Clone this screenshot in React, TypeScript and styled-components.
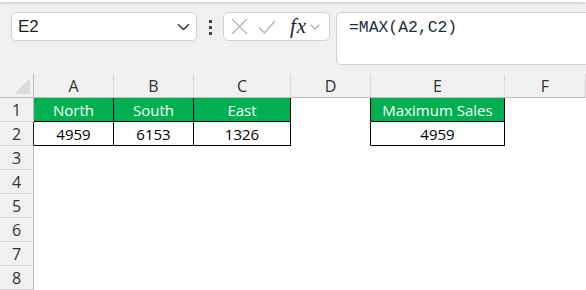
import React from 'react';
import styled, { createGlobalStyle } from 'styled-components';

const GlobalStyle = createGlobalStyle`
  html, body { margin: 0; padding: 0; }
  body { background: #f0f0f0; font-family: "Open Sans", "Liberation Sans", sans-serif; }
  * { box-sizing: border-box; }
`

const Page = styled.div`
  width: 586px;
  height: 290px;
  overflow: hidden;
  background: #f0f0f0;
  display: flex;
  flex-direction: column;
`

const TopEdge = styled.div`
  height: 2px;
  background: #fff;
  box-shadow: 0 1px 3px rgba(0, 0, 0, 0.18);
`

const Toolbar = styled.div`
  display: flex;
  align-items: flex-start;
  margin-top: 10px;
  padding-left: 11px;
`

const Box = styled.div`
  height: 29px;
  background: #fff;
  border: 1px solid #d1d1d1;
  border-radius: 5px;
  display: flex;
  align-items: center;
`

const NameBox = styled(Box)`
  width: 186px;
  padding: 0 6px 0 6px;
  justify-content: space-between;
  font-family: "Liberation Sans", Arial, sans-serif;
  font-size: 17px;
  color: #1f1f1f;
`

const Dots = styled.div`
  width: 26px;
  height: 29px;
  display: flex;
  flex-direction: column;
  align-items: center;
  justify-content: center;
  gap: 3px;
  padding-top: 1px;
  span {
    width: 3px;
    height: 3px;
    background: #444;
  }
`

const FxBox = styled(Box)`
  width: 107px;
  padding: 0 4px 0 7px;
  gap: 10px;
`

const FxText = styled.span`
  font-family: "Liberation Serif", "Times New Roman", serif;
  font-style: italic;
  font-size: 21px;
  color: #222;
  margin-left: 4px;
  margin-right: -7px;
  letter-spacing: 1px;
`

const FormulaBar = styled.div`
  flex: 1;
  margin-left: 6px;
  margin-right: -12px;
  height: 53px;
  background: #fff;
  border: 1px solid #d1d1d1;
  border-radius: 5px;
  padding: 5px 12px;
  font-family: "Liberation Mono", "DejaVu Sans Mono", monospace;
  font-size: 16.4px;
  color: #1b2a3a;
  line-height: 20px;
`

const Grid = styled.div`
  margin-top: 9px;
  display: grid;
  grid-template-columns: 34px 80px 80px 97px 80px 134px 81px 1fr;
  grid-auto-rows: 24px;
  font-size: 16px;
`

const Corner = styled.div`
  background: #f0f0f0;
  border-right: 1px solid #bdbdbd;
  border-bottom: 1px solid #bdbdbd;
  display: flex;
  align-items: flex-end;
  justify-content: flex-end;
  padding: 0 3px 3px 0;
`

const ColHead = styled.div`
  background: #f0f0f0;
  border-right: 1px solid #d8d8d8;
  border-bottom: 1px solid #bdbdbd;
  display: flex;
  align-items: center;
  justify-content: center;
  color: #333;
`

const RowHead = styled.div<{ $dark?: boolean }>`
  background: #f0f0f0;
  border-right: 1px solid ${p => (p.$dark ? '#1a1a1a' : '#bdbdbd')};
  border-bottom: 1px solid #d8d8d8;
  display: flex;
  align-items: center;
  justify-content: center;
  color: #333;
`

const Cell = styled.div<{ $fill?: boolean; $right?: boolean; $bottom?: boolean }>`
  background: ${p => (p.$fill ? '#00b050' : '#fff')};
  color: ${p => (p.$fill ? '#fff' : '#000')};
  border-right: 1px solid ${p => (p.$right ? '#000' : 'transparent')};
  border-bottom: 1px solid ${p => (p.$bottom ? '#000' : 'transparent')};
  display: flex;
  align-items: center;
  justify-content: center;
  white-space: nowrap;
  font-size: 15px;
`

const Chevron = ({ size = 12, color = '#333' }: { size?: number; color?: string }) => (
  <svg width={size} height={size * 0.6} viewBox="0 0 12 7" fill="none">
    <path d="M1 1l5 5 5-5" stroke={color} strokeWidth="1.3" />
  </svg>
)

const columns = ['A', 'B', 'C', 'D', 'E', 'F', '']

type CellData = { text?: string; fill?: boolean; right?: boolean; bottom?: boolean }

const rows: CellData[][] = [
  [
    { text: 'North', fill: true, right: true, bottom: true },
    { text: 'South', fill: true, right: true, bottom: true },
    { text: 'East', fill: true, right: true, bottom: true },
    { right: true },
    { text: 'Maximum Sales', fill: true, right: true, bottom: true },
    {},
    {},
  ],
  [
    { text: '4959', right: true, bottom: true },
    { text: '6153', right: true, bottom: true },
    { text: '1326', right: true, bottom: true },
    { right: true },
    { text: '4959', right: true, bottom: true },
    {},
    {},
  ],
]

const App = () => {
  const allRows: CellData[][] = [...rows]
  for (let i = 3; i <= 8; i++) allRows.push([{}, {}, {}, {}, {}, {}, {}])

  return (
    <>
      <GlobalStyle />
      <Page>
        <TopEdge />
        <Toolbar>
          <NameBox>
            <span>E2</span>
            <Chevron size={13} color="#333" />
          </NameBox>
          <Dots><span /><span /><span /></Dots>
          <FxBox>
            <svg width="17" height="17" viewBox="0 0 17 17" fill="none">
              <path d="M1 1l15 15M16 1L1 16" stroke="#b4b4b4" strokeWidth="1.3" />
            </svg>
            <svg width="18" height="14" viewBox="0 0 18 14" fill="none">
              <path d="M1 7.5l5.5 5.5L17 1" stroke="#b4b4b4" strokeWidth="1.3" />
            </svg>
            <FxText>fx</FxText>
            <Chevron size={10} color="#9a9a9a" />
          </FxBox>
          <FormulaBar>=MAX(A2,C2)</FormulaBar>
        </Toolbar>
        <Grid>
          <Corner>
            <svg width="16" height="16" viewBox="0 0 16 16">
              <polygon points="16,0 16,16 0,16" fill="#dcdcdc" />
            </svg>
          </Corner>
          {columns.map((c, i) => <ColHead key={i}>{c}</ColHead>)}
          {allRows.map((r, ri) => (
            <React.Fragment key={ri}>
              <RowHead $dark={ri === 1}>{ri + 1}</RowHead>
              {r.map((cell, ci) => (
                <Cell key={ci} $fill={cell.fill} $right={cell.right} $bottom={cell.bottom}>
                  {cell.text}
                </Cell>
              ))}
            </React.Fragment>
          ))}
        </Grid>
      </Page>
    </>
  );
};

export default App;
